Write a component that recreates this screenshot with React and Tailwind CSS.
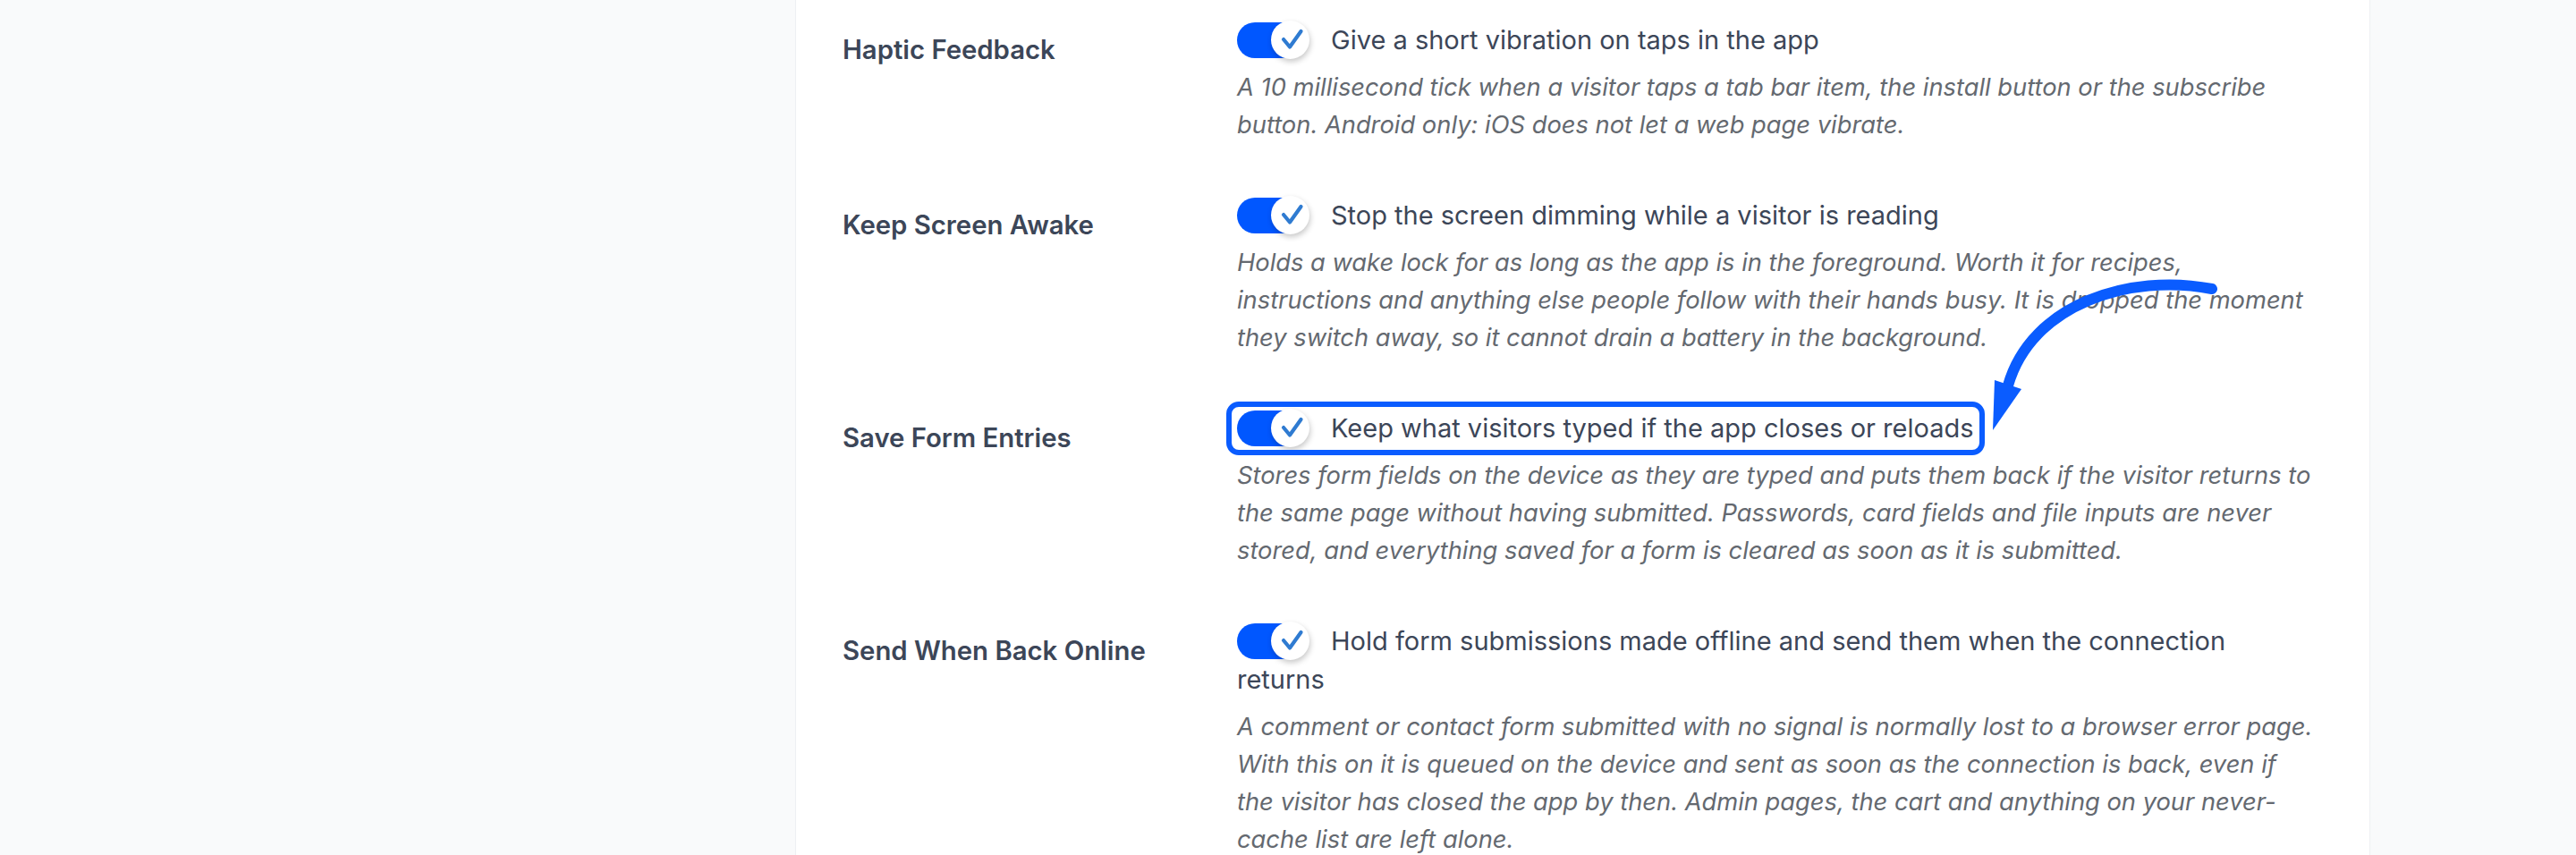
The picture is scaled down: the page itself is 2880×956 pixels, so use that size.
import React from 'react'

const settings = [
  {
    label: 'Haptic Feedback',
    title: ['Give a short vibration on taps in the app'],
    desc: [
      'A 10 millisecond tick when a visitor taps a tab bar item, the install button or the subscribe',
      'button. Android only: iOS does not let a web page vibrate.',
    ],
  },
  {
    label: 'Keep Screen Awake',
    title: ['Stop the screen dimming while a visitor is reading'],
    desc: [
      'Holds a wake lock for as long as the app is in the foreground. Worth it for recipes,',
      'instructions and anything else people follow with their hands busy. It is dropped the moment',
      'they switch away, so it cannot drain a battery in the background.',
    ],
  },
  {
    label: 'Save Form Entries',
    title: ['Keep what visitors typed if the app closes or reloads'],
    desc: [
      'Stores form fields on the device as they are typed and puts them back if the visitor returns to',
      'the same page without having submitted. Passwords, card fields and file inputs are never',
      'stored, and everything saved for a form is cleared as soon as it is submitted.',
    ],
    highlight: true,
  },
  {
    label: 'Send When Back Online',
    title: ['Hold form submissions made offline and send them when the connection', 'returns'],
    desc: [
      'A comment or contact form submitted with no signal is normally lost to a browser error page.',
      'With this on it is queued on the device and sent as soon as the connection is back, even if',
      'the visitor has closed the app by then. Admin pages, the cart and anything on your never-',
      'cache list are left alone.',
    ],
  },
]

const Lines = ({ lines }) =>
  lines.map((line, i) => (
    <React.Fragment key={i}>
      {i > 0 && <br />}
      {line}
    </React.Fragment>
  ))

const Toggle = () => (
  <span className="inline-flex items-center align-top h-[43px] mr-[24px]">
    <span className="w-[76px] h-[40px] rounded-full bg-[#0057ff]" />
    <span className="-ml-[38px] w-[43px] h-[43px] rounded-full bg-white shadow-[1px_3px_6px_rgba(0,0,0,0.22)] flex items-center justify-center">
      <svg width="43" height="43" viewBox="0 0 43 43" fill="none">
        <path d="M14 21 L21 29.5 L33.5 12" stroke="#2f7bd1" strokeWidth="4.2" strokeLinecap="round" strokeLinejoin="round" />
      </svg>
    </span>
  </span>
)

// annotation arrow, drawn in page coordinates
const Arrow = () => (
  <svg
    className="absolute left-[838px] top-[-147px] pointer-events-none"
    width="260"
    height="175"
    viewBox="2220 310 260 175"
    fill="none"
  >
    <path d="M2472 323 C2380 305 2270 340 2244 431" stroke="#0a5cff" strokeWidth="12" strokeLinecap="round" />
    <polygon points="2229,425 2259,435 2227,481" fill="#0a5cff" />
  </svg>
)

const SettingRow = ({ item }) => (
  <div className="grid grid-cols-[441px_1fr] py-[29px]">
    <div className="pt-[13px] text-[29.3px] leading-[40px] font-semibold text-[#3c4658]">
      {item.label}
    </div>
    <div className="whitespace-nowrap">
      <div className="text-[29px] leading-[43px] text-[#3c4658]">
        {item.highlight ? (
          <span className="relative inline-block">
            <Toggle />
            <Lines lines={item.title} />
            <span className="absolute -left-[12px] -right-[12px] -top-[8px] -bottom-[9px] border-[6px] border-[#0a5cff] rounded-[14px]" />
            <Arrow />
          </span>
        ) : (
          <>
            <Toggle />
            <Lines lines={item.title} />
          </>
        )}
      </div>
      <p className="mt-[11px] text-[27.3px] leading-[42px] italic text-[#646970]">
        <Lines lines={item.desc} />
      </p>
    </div>
  </div>
)

const App = () => {
  return (
    <div className="h-[956px] overflow-hidden bg-[#f9fafb] flex font-['Inter','Noto_Sans',sans-serif]">
      <div className="w-[889px] shrink-0" />
      <div className="w-[1761px] shrink-0 h-full bg-white border-x border-[#eef0f3] px-[52px] overflow-hidden">
        <div className="-mt-[6px]">
          {settings.map((item) => (
            <SettingRow key={item.label} item={item} />
          ))}
        </div>
      </div>
    </div>
  )
}

export default App
